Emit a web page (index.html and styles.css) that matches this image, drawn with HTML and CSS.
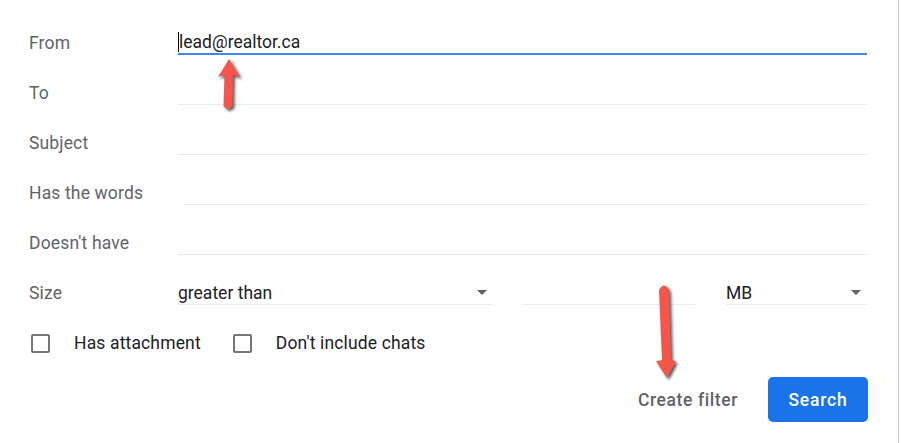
FILE: index.html
```html
<!DOCTYPE html>
<html lang="en">
<head>
  <meta charset="UTF-8">
  <meta name="viewport" content="width=device-width, initial-scale=1">
  <title>Search filter</title>
  <link rel="stylesheet" href="styles.css">
</head>

<body>

<div id="panel">
  <!-- text rows -->
  <div class="row">
    <div class="label">From</div>
    <div class="field focused"><span class="cursor"></span>lead@realtor.ca</div>
  </div>
  <div class="row">
    <div class="label">To</div>
    <div class="field"></div>
  </div>
  <div class="row">
    <div class="label">Subject</div>
    <div class="field"></div>
  </div>
  <div class="row">
    <div class="label">Has the words</div>
    <div class="field shifted"></div>
  </div>
  <div class="row">
    <div class="label">Doesn't have</div>
    <div class="field"></div>
  </div>

  <!-- size row -->
  <div class="row">
    <div class="label">Size</div>
    <div class="field select size-op">greater than<span class="caret"></span></div>
    <div class="field size-num"></div>
    <div class="field select size-unit">MB<span class="caret"></span></div>
  </div>

  <!-- checkboxes -->
  <div class="row checks">
    <label class="check"><span class="box"></span>Has attachment</label>
    <label class="check"><span class="box"></span>Don't include chats</label>
  </div>

  <div id="actions">
    <button class="text-btn">Create filter</button>
    <button class="primary-btn">Search</button>
  </div>
</div>

<!-- annotation arrows -->
<svg class="arrow arrow-up" width="50" height="70" viewBox="0 0 50 70">
  <path d="M19 9 L30 27 Q27 26 23 25 L22.5 56 Q18 62 13.5 56 L14.5 25 Q11 26 8 27 Z" fill="#f6564a"/>
</svg>
<svg class="arrow arrow-down" width="45" height="110" viewBox="0 0 45 110">
  <path d="M14 12 Q19 3 24 12 L26 82 Q29 83 31 83 L22 100 L11 83 Q14 83 17 82 Z" fill="#f6564a"/>
</svg>

</body>
</html>
```

FILE: styles.css
```css
body {
  font-family: Roboto, 'Liberation Sans', sans-serif;
  margin: 0;
  padding: 0;
  background: #fff;
  height: 100vh;
  overflow: hidden;
}
#panel {
  box-sizing: border-box;
  width: 899px;
  height: 100vh;
  padding: 18px 31px 0 29px;
  border-right: 1px solid #c9c9c9;
  font-size: 17.5px;
}
.row {
  display: flex;
  align-items: center;
  height: 50px;
}
.label {
  width: 149px;
  flex: none;
  color: #5f6368;
  letter-spacing: 0.15px;
}
.field {
  flex: 1;
  height: 22px;
  line-height: 22px;
  border-bottom: 1px solid #e8eaed;
  color: #202124;
}
.field.focused {
  height: 21px;
  border-bottom: 2px solid #4285f4;
  display: flex;
  align-items: center;
}
.cursor {
  display: inline-block;
  width: 1px;
  height: 20px;
  background: #000;
}
.field.shifted {
  margin-left: 6px;
}
.select {
  display: flex;
  justify-content: space-between;
  align-items: center;
  padding-right: 5px;
}
.size-op {
  flex: none;
  width: 309px;
}
.size-num {
  flex: none;
  width: 173px;
  margin-left: 31px;
}
.size-unit {
  margin-left: 30px;
  padding-right: 6px;
}
.caret {
  width: 0;
  height: 0;
  border-left: 5px solid transparent;
  border-right: 5px solid transparent;
  border-top: 5px solid #5f6368;
}
.checks {
  gap: 30px;
}
.check {
  display: flex;
  align-items: center;
  color: #202124;
  letter-spacing: 0.15px;
}
.box {
  box-sizing: border-box;
  width: 19px;
  height: 19px;
  margin-left: 2px;
  margin-right: 24px;
  border: 2px solid #757575;
  border-radius: 2px;
}
#actions {
  display: flex;
  justify-content: flex-end;
  align-items: center;
  margin-top: 9px;
  margin-right: -1px;
  gap: 30px;
}
.text-btn {
  background: none;
  border: none;
  padding: 0;
  font-family: inherit;
  font-size: 17.5px;
  font-weight: 500;
  letter-spacing: 0.6px;
  color: #5f6368;
}
.primary-btn {
  width: 100px;
  height: 45px;
  background: #1a73e8;
  color: #fff;
  border: none;
  border-radius: 5px;
  font-family: inherit;
  font-size: 17.5px;
  font-weight: 500;
  letter-spacing: 0.8px;
}
.arrow {
  position: absolute;
  filter: drop-shadow(2px 2px 1.5px rgba(0,0,0,0.65));
}
.arrow-up {
  left: 210px;
  top: 50px;
}
.arrow-down {
  left: 645px;
  top: 278px;
}
```
